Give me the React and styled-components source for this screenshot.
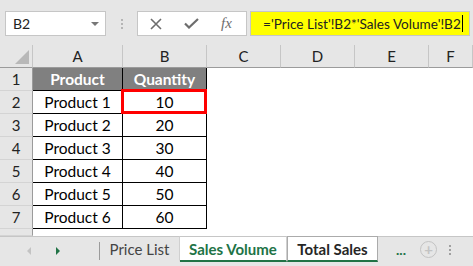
import { Fragment } from "react";
import styled, { createGlobalStyle } from "styled-components";

const Global = createGlobalStyle`
  html, body { margin: 0; padding: 0; background: #fff; }
  body { font-family: Lato, "Liberation Sans", sans-serif; overflow: hidden; }
  * { box-sizing: border-box; }
`;

const COLS = [
  { key: "A", w: 90 },
  { key: "B", w: 84 },
  { key: "C", w: 74 },
  { key: "D", w: 74 },
  { key: "E", w: 74 },
  { key: "F", w: 44 },
];

const DATA = [
  ["Product", "Quantity"],
  ["Product 1", "10"],
  ["Product 2", "20"],
  ["Product 3", "30"],
  ["Product 4", "40"],
  ["Product 5", "50"],
  ["Product 6", "60"],
];

const Page = styled.div`
  width: 473px;
  height: 266px;
  display: flex;
  flex-direction: column;
  background: #fff;
`;

const FormulaBar = styled.div`
  height: 46px;
  background: #e6e6e6;
  display: flex;
  align-items: flex-start;
  padding: 11px 3px 0 5px;
`;

const NameBox = styled.div`
  width: 101px;
  height: 25px;
  background: #fff;
  border: 1px solid #c6c6c6;
  display: flex;
  align-items: center;
  justify-content: space-between;
  padding: 0 6px 0 7px;
  font-size: 14px;
  color: #222;
`;

const Caret = styled.span`
  width: 0;
  height: 0;
  border-left: 4px solid transparent;
  border-right: 4px solid transparent;
  border-top: 4px solid #777;
`;

const Grip = styled.div`
  width: 31px;
  height: 25px;
  display: flex;
  flex-direction: column;
  align-items: center;
  justify-content: center;
  gap: 2px;
  & > i {
    width: 2px;
    height: 2px;
    background: #b5b5b5;
  }
`;

const FxPanel = styled.div`
  width: 110px;
  height: 25px;
  background: #fff;
  border: 1px solid #c6c6c6;
  display: flex;
  align-items: center;
  padding-left: 12px;
  gap: 22px;
  color: #6d6d6d;
  margin-right: 3px;
`;

const FxText = styled.span`
  font-family: "Liberation Serif", serif;
  font-style: italic;
  font-size: 15px;
  color: #6d6d6d;
`;

const FormulaInput = styled.div`
  flex: 1;
  height: 25px;
  background: #ffff00;
  border: 1px solid #c6c6c6;
  display: flex;
  align-items: center;
  padding-left: 12px;
  font-size: 13.6px;
  color: #222;
  white-space: nowrap;
  overflow: hidden;
`;

const Cursor = styled.span`
  display: inline-block;
  width: 1px;
  height: 17px;
  background: #000;
  margin-left: 1px;
`;

const Sheet = styled.div`
  display: grid;
  grid-template-columns: 33px ${COLS.map((c) => c.w + "px").join(" ")};
  grid-template-rows: 23px repeat(7, 23px) 7px;
  overflow: hidden;
  height: 191px;
  flex: none;
`;

const Corner = styled.div`
  background: #e6e6e6;
  border-right: 1px solid #c6c6c6;
  border-bottom: 1px solid #9b9b9b;
  position: relative;
  &::after {
    content: "";
    position: absolute;
    right: 3px;
    bottom: 3px;
    border-left: 14px solid transparent;
    border-bottom: 14px solid #b8b8b8;
  }
`;

const ColHead = styled.div`
  background: #e6e6e6;
  border-right: 1px solid #c6c6c6;
  border-bottom: 1px solid #9b9b9b;
  display: flex;
  align-items: center;
  justify-content: center;
  font-size: 15px;
  color: #222;
`;

const RowHead = styled.div`
  background: #e6e6e6;
  border-right: 1px solid #9b9b9b;
  border-bottom: 1px solid #d4d4d4;
  display: flex;
  align-items: center;
  justify-content: center;
  font-size: 15px;
  color: #222;
`;

const Cell = styled.div`
  position: relative;
  background: ${(p) => (p.$head ? "#808080" : "#fff")};
  color: ${(p) => (p.$head ? "#fff" : "#000")};
  font-weight: ${(p) => (p.$head ? 700 : 400)};
  border-right: ${(p) => (p.$boxed ? "1px solid #000" : "none")};
  border-bottom: ${(p) => (p.$boxed ? "1px solid #000" : "none")};
  display: flex;
  align-items: center;
  justify-content: center;
  font-size: 15.5px;
`;

const Selection = styled.div`
  position: absolute;
  left: -2px;
  top: -2px;
  right: -1px;
  bottom: -1px;
  border: 3px solid #ff0000;
`;

const TabBar = styled.div`
  flex: 1;
  background: #e6e6e6;
  border-top: 1px solid #c6c6c6;
  display: flex;
  align-items: stretch;
  padding-bottom: 4px;
`;

const Nav = styled.div`
  width: 100px;
  display: flex;
  align-items: center;
  padding-left: 27px;
  gap: 25px;
  border-right: 1px solid #9b9b9b;
  margin: 5px 0 2px;
`;

const Arrow = styled.span`
  width: 0;
  height: 0;
  border-top: 4px solid transparent;
  border-bottom: 4px solid transparent;
  ${(p) =>
    p.$dir === "left"
      ? "border-right: 4px solid #c3c3c3;"
      : "border-left: 4px solid #217346;"}
`;

const Tab = styled.div`
  width: ${(p) => p.$w}px;
  display: flex;
  align-items: center;
  justify-content: center;
  font-size: 15px;
  margin-top: -1px;
  background: ${(p) => (p.$active ? "#fff" : "#e6e6e6")};
  color: ${(p) => (p.$green ? "#217346" : p.$active ? "#262626" : "#444")};
  font-weight: ${(p) => (p.$active ? 700 : 400)};
  border-bottom: ${(p) => (p.$active ? "2px solid #217346" : "2px solid transparent")};
  border-top: 1px solid ${(p) => (p.$framed ? "#ababab" : "#c6c6c6")};
  border-left: ${(p) => (p.$framed ? "1px solid #ababab" : "none")};
  border-right: 1px solid ${(p) => (p.$framed ? "#ababab" : "#d0d0d0")};
`;

const More = styled.div`
  display: flex;
  align-items: center;
  gap: 14px;
  padding-left: 18px;
  color: #217346;
  font-weight: 700;
  font-size: 14px;
`;

const Plus = styled.span`
  width: 17px;
  height: 17px;
  border-radius: 50%;
  border: 1.5px solid #c3c3c3;
  color: #c3c3c3;
  display: flex;
  align-items: center;
  justify-content: center;
  font-size: 15px;
  font-weight: 700;
  line-height: 1;
`;

const VDots = styled(Grip)`
  width: auto;
  margin-left: 12px;
  & > i {
    background: #a0a0a0;
  }
`;

function XIcon() {
  return (
    <svg width="12" height="12" viewBox="0 0 12 12">
      <path d="M1 1 L11 11 M11 1 L1 11" stroke="#6d6d6d" strokeWidth="1.6" />
    </svg>
  );
}

function CheckIcon() {
  return (
    <svg width="15" height="11" viewBox="0 0 15 11">
      <path d="M1 5.5 L5 9.5 L14 1" stroke="#6d6d6d" strokeWidth="2.2" fill="none" />
    </svg>
  );
}

export default function App() {
  const rows = [...DATA, null];
  return (
    <Page>
      <Global />
      <FormulaBar>
        <NameBox>
          B2
          <Caret />
        </NameBox>
        <Grip>
          <i />
          <i />
          <i />
        </Grip>
        <FxPanel>
          <XIcon />
          <CheckIcon />
          <FxText>fx</FxText>
        </FxPanel>
        <FormulaInput>
          ='Price List'!B2*'Sales Volume'!B2
          <Cursor />
        </FormulaInput>
      </FormulaBar>

      <Sheet>
        <Corner />
        {COLS.map((c) => (
          <ColHead key={c.key}>{c.key}</ColHead>
        ))}
        {rows.map((row, r) => (
          <Fragment key={r}>
            <RowHead>{row ? r + 1 : ""}</RowHead>
            {COLS.map((c, ci) => {
              const val = row && ci < 2 ? row[ci] : "";
              const boxed = !!row && ci < 2;
              return (
                <Cell key={c.key} $boxed={boxed} $head={boxed && r === 0}>
                  {val}
                  {r === 1 && ci === 1 && <Selection />}
                </Cell>
              );
            })}
          </Fragment>
        ))}
      </Sheet>

      <TabBar>
        <Nav>
          <Arrow $dir="left" />
          <Arrow $dir="right" />
        </Nav>
        <Tab $w={80}>Price List</Tab>
        <Tab $w={107} $active $green>
          Sales Volume
        </Tab>
        <Tab $w={91} $active $framed>
          Total Sales
        </Tab>
        <More>
          <span>...</span>
          <Plus>+</Plus>
        </More>
        <VDots>
          <i />
          <i />
          <i />
        </VDots>
      </TabBar>
    </Page>
  );
}
